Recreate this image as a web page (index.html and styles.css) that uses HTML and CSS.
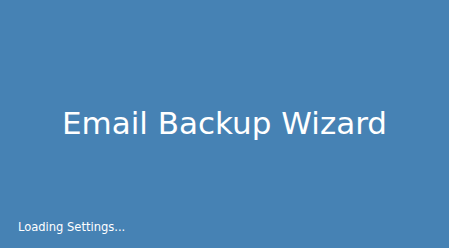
FILE: index.html
```
<!DOCTYPE html>
<html>
<head>
<meta charset="utf-8">
<link rel="stylesheet" href="styles.css">
</head>
<body>
<div class="splash">
  <div class="main"><h1 class="title">Email Backup Wizard</h1></div>
  <div class="status">Loading Settings...</div>
</div>
</body>
</html>
```
FILE: styles.css
```
html, body { margin: 0; padding: 0; }
body { background: #4682b4; }
.splash {
  width: 449px;
  height: 248px;
  display: flex;
  flex-direction: column;
  color: #fff;
  font-family: "DejaVu Sans", sans-serif;
}
.main {
  flex: 1;
  display: flex;
  align-items: center;
  justify-content: center;
  padding-top: 27px;
}
.title {
  margin: 0;
  font-weight: 400;
  font-size: 31px;
  line-height: 36px;
}
.status {
  padding: 0 0 13px 18px;
  font-family: "DejaVu Sans Condensed", "DejaVu Sans", sans-serif;
  font-stretch: condensed;
  font-size: 12.8px;
  line-height: 16px;
}
```
